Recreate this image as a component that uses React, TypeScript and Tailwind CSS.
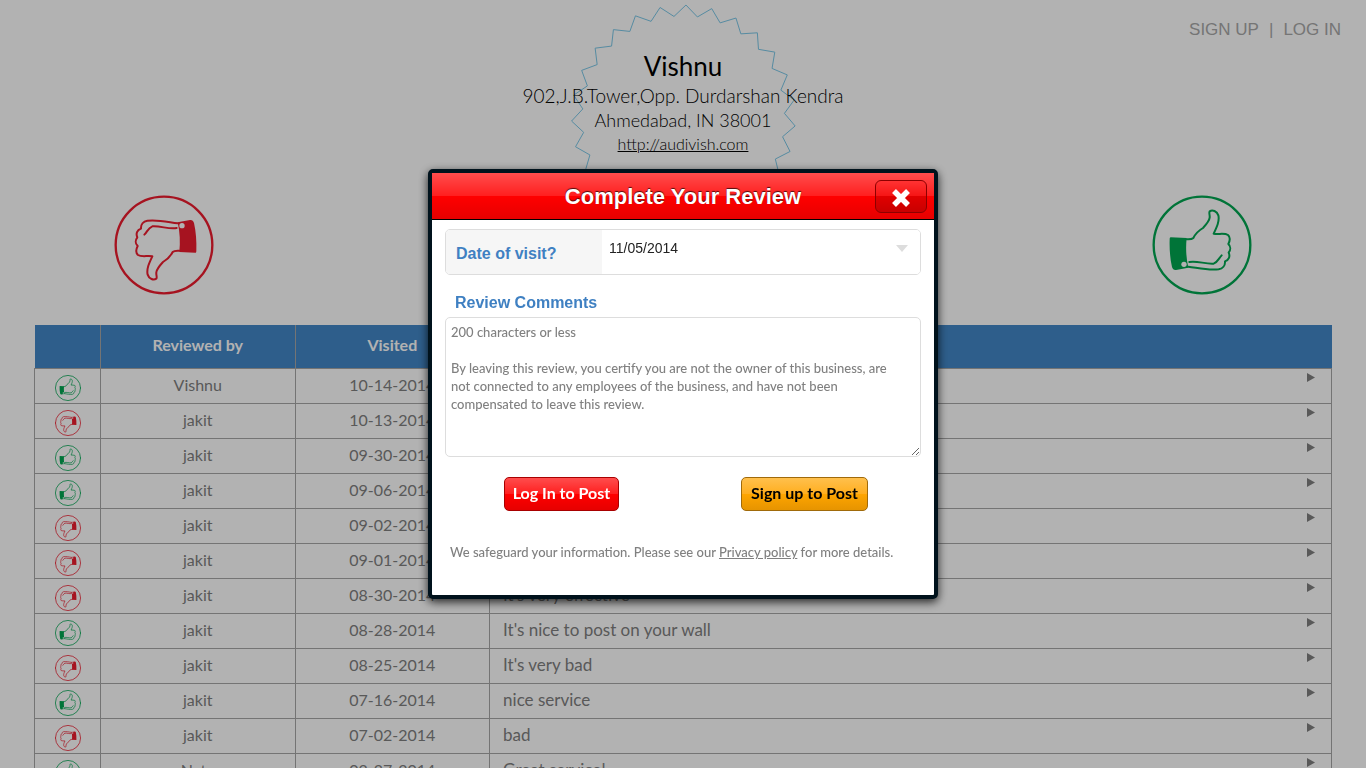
import { useState } from 'react'
import { clsx } from 'clsx'

type Vote = 'up' | 'down'

interface Review {
  vote: Vote
  name: string
  visited: string
  comment: string
}

const reviews: Review[] = [
  { vote: 'up', name: 'Vishnu', visited: '10-14-2014', comment: 'Nice' },
  { vote: 'down', name: 'jakit', visited: '10-13-2014', comment: 'Bad' },
  { vote: 'up', name: 'jakit', visited: '09-30-2014', comment: 'Good' },
  { vote: 'up', name: 'jakit', visited: '09-06-2014', comment: 'Nice' },
  { vote: 'down', name: 'jakit', visited: '09-02-2014', comment: 'Bad' },
  { vote: 'down', name: 'jakit', visited: '09-01-2014', comment: 'Bad' },
  { vote: 'down', name: 'jakit', visited: '08-30-2014', comment: "It's very effective" },
  { vote: 'up', name: 'jakit', visited: '08-28-2014', comment: "It's nice to post on your wall" },
  { vote: 'down', name: 'jakit', visited: '08-25-2014', comment: "It's very bad" },
  { vote: 'up', name: 'jakit', visited: '07-16-2014', comment: 'nice service' },
  { vote: 'down', name: 'jakit', visited: '07-02-2014', comment: 'bad' },
  { vote: 'up', name: 'Nate', visited: '02-27-2014', comment: 'Great service!' },
]

const placeholder = `200 characters or less

By leaving this review, you certify you are not the owner of this business, are not connected to any employees of the business, and have not been compensated to leave this review.`

// 27 pointed seal behind the business name
const TIPS = 27
const sealPoints = Array.from({ length: TIPS * 2 }, (_, i) => {
  const radius = i % 2 === 0 ? 112 : 101
  const angle = (i * Math.PI) / TIPS + 0.022
  return `${113.5 + radius * Math.sin(angle)},${113 - radius * Math.cos(angle)}`
}).join(' ')

function Thumb({ vote, small }: { vote: Vote; small?: boolean }) {
  return (
    <svg
      viewBox="0 0 300 300"
      role="img"
      aria-label={vote === 'up' ? 'Thumbs up' : 'Thumbs down'}
      className={clsx(
        small ? 'mx-auto size-[26px]' : 'size-[100px]',
        vote === 'up' ? 'text-[#00a651]' : 'rotate-180 text-[#ee1c2e]'
      )}
      fill="none"
      stroke="currentColor"
      strokeWidth={small ? 8 : 6}
      strokeLinecap="round"
      strokeLinejoin="round"
    >
      <circle cx="150" cy="150" r="145" strokeWidth={small ? 9 : 7} />
      <path
        d="M56 127 L104 129 C101 158 102 187 109 218 L72 225 C66 226 62 222 60 216 C54 190 52 160 53 133 C53 129 54 127 56 127 Z"
        fill="currentColor"
        stroke="none"
      />
      <path d="M104 133 C112 133 119 134 124 129 C131 115 141 106 153 99 C165 86 172 77 173 68 C174 60 170 53 173 49 C181 43 195 48 199 61 C203 78 195 95 185 116 C199 119 218 113 228 120 C236 127 234 137 229 147 C237 154 236 165 230 173 C235 184 231 195 219 199 C220 212 212 221 200 223 C168 227 139 219 109 215" />
      <path d="M112 201 C134 196 160 208 185 206 C198 201 200 190 209 181" />
      <circle cx="96" cy="208" r="8" className="fill-white" stroke="none" />
    </svg>
  )
}

function BusinessHeader() {
  return (
    <header className="relative pt-12 text-center text-black">
      <svg viewBox="0 0 226 226" className="absolute left-1/2 top-1 size-[226px] -translate-x-1/2">
        <polygon points={sealPoints} fill="none" stroke="#7cc8e8" strokeWidth="1" />
      </svg>
      <nav className="absolute right-[25px] top-[17px] flex gap-[10px] font-[Liberation_Sans,sans-serif] text-[17px] leading-[26px] text-[#a8a8a8]">
        <a href="#signup">SIGN UP</a>
        <span>|</span>
        <a href="#login">LOG IN</a>
      </nav>
      <div className="relative">
        <h1 className="text-[26px] leading-9">Vishnu</h1>
        <p className="text-[19px] font-light leading-6">902,J.B.Tower,Opp. Durdarshan Kendra</p>
        <p className="text-lg font-light leading-6">Ahmedabad, IN 38001</p>
        <a href="#site" className="block text-base font-light leading-6 underline">http://audivish.com</a>
      </div>
    </header>
  )
}

function ReviewTable() {
  return (
    <div className="mx-[34px] mt-[30px]">
      <table className="w-full table-fixed border-collapse text-base leading-6 text-[#808080]">
        <thead>
          <tr className="h-[43px] bg-[#4287c7] text-white">
            <th aria-label="Vote" className="w-[66px] border-r border-[#a7a7a7]" />
            <th className="w-[15%] border-r border-[#a7a7a7] pb-[2px] font-bold">Reviewed by</th>
            <th className="w-[15%] border-r border-[#a7a7a7] pb-[2px] font-bold">Visited</th>
            <th className="pb-[2px] font-bold">Review</th>
          </tr>
        </thead>
        <tbody>
          {reviews.map((r) => (
            <tr key={r.visited} className="h-[35px]">
              <td className="border border-[#a7a7a7] pt-1"><Thumb vote={r.vote} small /></td>
              <td className="border border-[#a7a7a7] pb-[2px] text-center">{r.name}</td>
              <td className="border border-[#a7a7a7] pb-[2px] text-center">{r.visited}</td>
              <td className="border border-[#a7a7a7] pb-[2px] pl-[13px] pr-4">
                <div className="flex items-start justify-between text-[17px]">
                  {r.comment}
                  <svg viewBox="0 0 8 9" className="h-[9px] w-2 fill-[#808080]">
                    <path d="M0 0 L8 4.5 L0 9 Z" />
                  </svg>
                </div>
              </td>
            </tr>
          ))}
        </tbody>
      </table>
    </div>
  )
}

function ReviewDialog({ onClose }: { onClose: () => void }) {
  const [comment, setComment] = useState('')

  return (
    <div className="fixed inset-0 flex items-center justify-center bg-black/30">
      <div
        role="dialog"
        aria-labelledby="review-title"
        className="w-[510px] rounded-[5px] border-4 border-[#00121c] bg-white shadow-[0_3px_10px_rgba(0,0,0,0.8)]"
      >
        <div className="relative flex h-[47px] items-center justify-center border-b border-black bg-[linear-gradient(#ff4d4d,#ff1f1f_50%,#ff0000_50%,#e60000)]">
          <h2
            id="review-title"
            className="font-[Liberation_Sans,sans-serif] text-[22px] font-bold text-white [text-shadow:0_-1px_1px_rgba(0,0,0,0.7)]"
          >
            Complete Your Review
          </h2>
          <button
            type="button"
            aria-label="Close"
            onClick={onClose}
            className="absolute right-[7px] top-[7px] flex h-[33px] w-[52px] items-center justify-center rounded-md border border-[#8c0000] bg-[linear-gradient(#ff3333,#f51414_50%,#e00000_50%,#c80000)]"
          >
            <svg viewBox="0 0 18 18" className="mt-[2px] size-[18px] stroke-white">
              <path d="M2 2 L16 16 M16 2 L2 16" strokeWidth="5.5" />
            </svg>
          </button>
        </div>

        <form className="px-[13px] pb-[34px] pt-[9px]" onSubmit={(e) => e.preventDefault()}>
          <div className="relative flex h-[46px] overflow-hidden rounded-[5px] border border-[#ddd]">
            <label
              htmlFor="visit-date"
              className="flex w-[156px] shrink-0 items-center bg-[#f6f6f6] pl-[10px] pt-1 font-[Liberation_Sans,sans-serif] text-base font-bold text-[#3f80c2]"
            >
              Date of visit?
            </label>
            <select
              id="visit-date"
              className="min-w-0 flex-1 appearance-none bg-white pb-2 pl-[7px] font-[Liberation_Sans,sans-serif] text-sm text-[#222] outline-none"
            >
              <option>11/05/2014</option>
            </select>
            <svg viewBox="0 0 12 7" className="pointer-events-none absolute right-3 top-[15px] h-[7px] w-3 fill-[#ddd]">
              <path d="M0 0 H12 L6 7 Z" />
            </svg>
          </div>

          <label
            htmlFor="review-comments"
            className="mt-[18px] block pl-[10px] font-[Liberation_Sans,sans-serif] text-base leading-5 font-bold text-[#3f80c2]"
          >
            Review Comments
          </label>
          <textarea
            id="review-comments"
            maxLength={200}
            value={comment}
            onChange={(e) => setComment(e.target.value)}
            placeholder={placeholder}
            className="mt-1 block h-[140px] w-full rounded-[5px] border border-[#ddd] py-[5px] pl-[5px] pr-[30px] text-[13px] leading-[18px] font-medium text-[#333] outline-none placeholder:text-[#808080]"
          />

          <div className="-mx-[5px] mt-5 grid grid-cols-2 justify-items-center text-base font-bold">
            <button
              type="button"
              className="h-[34px] rounded-[5px] border border-[#a80000] bg-[linear-gradient(#ff4d4d,#ff1f1f_50%,#ff0000_50%,#e60000)] px-2 pb-[3px] text-white"
            >
              Log In to Post
            </button>
            <button
              type="button"
              className="h-[34px] rounded-[5px] border border-[#a06a0a] bg-[linear-gradient(#ffc04d,#ffae1f_50%,#ffa500_50%,#e69400)] px-[9px] pb-[3px] text-black"
            >
              Sign up to Post
            </button>
          </div>

          <p className="mt-8 pl-[5px] text-[13px] leading-[18px] font-medium text-[#808080]">
            We safeguard your information. Please see our{' '}
            <a href="#privacy" className="underline">Privacy policy</a> for more details.
          </p>
        </form>
      </div>
    </div>
  )
}

export default function App() {
  const [open, setOpen] = useState(true)

  return (
    <div className={clsx('min-h-screen bg-white font-[Lato,sans-serif]', open && 'h-screen overflow-hidden')}>
      <BusinessHeader />
      <div className="mt-[39px] flex justify-between px-[114px]">
        <Thumb vote="down" />
        <Thumb vote="up" />
      </div>
      <ReviewTable />
      {open && <ReviewDialog onClose={() => setOpen(false)} />}
    </div>
  )
}
